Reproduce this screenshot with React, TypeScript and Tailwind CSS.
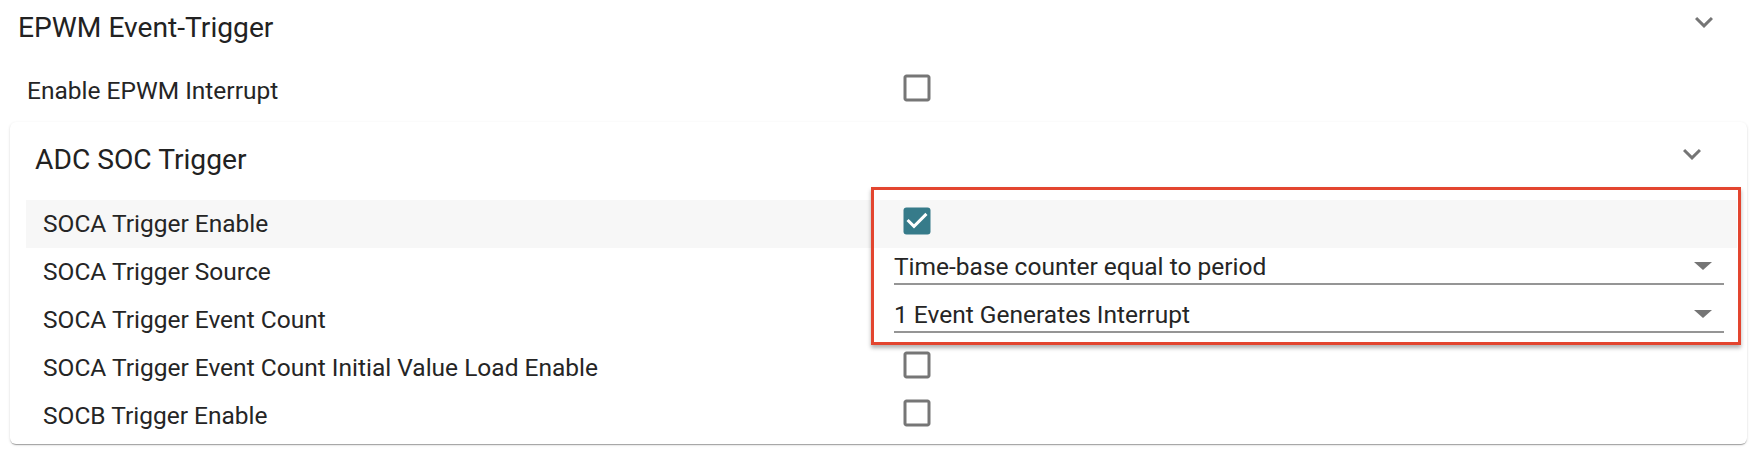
import React from "react";

const ExpandMore = ({ className = "" }: { className?: string }) => (
  <svg viewBox="0 0 24 24" width={36} height={36} className={className}>
    <path fill="#757575" d="M16.59 8.59 12 13.17 7.41 8.59 6 10l6 6 6-6z" />
  </svg>
);

const Unchecked = () => (
  <svg viewBox="0 0 24 24" width={36} height={36}>
    <path
      fill="#767676"
      d="M19 5v14H5V5h14m0-2H5c-1.1 0-2 .9-2 2v14c0 1.1.9 2 2 2h14c1.1 0 2-.9 2-2V5c0-1.1-.9-2-2-2z"
    />
  </svg>
);

const Checked = () => (
  <svg viewBox="0 0 24 24" width={36} height={36}>
    <rect x="3" y="3" width="18" height="18" rx="2" fill="#367b8a" />
    <path fill="#ffffff" d="M10 17l-5-5 1.41-1.41L10 14.17l7.59-7.59L19 8l-9 9z" />
  </svg>
);

const Caret = () => (
  <svg width={18} height={8} viewBox="0 0 18 8">
    <polygon points="0,0 18,0 9,8" fill="#757575" />
  </svg>
);

const CheckCell = ({ checked }: { checked?: boolean }) => (
  <div className="flex items-center h-full">
    <div className="ml-[5px] mb-[6px]">{checked ? <Checked /> : <Unchecked />}</div>
  </div>
);

const Select = ({ value }: { value: string }) => (
  <div className="flex items-end h-full pb-[11px]">
    <div className="flex items-center justify-between w-full h-[34px] border-b-2 border-[#959595]">
      <span className="text-[24.5px] text-[#252525] leading-none">{value}</span>
      <span className="mr-[12px] mb-[2px]">
        <Caret />
      </span>
    </div>
  </div>
);

const Row = ({
  label,
  children,
  shaded,
}: {
  label: string;
  children: React.ReactNode;
  shaded?: boolean;
}) => (
  <div className={`flex h-[48px] pl-[17px] pr-[13px] ${shaded ? "bg-[#f7f7f7]" : ""}`}>
    <div className="w-[851px] shrink-0 flex items-center text-[24.5px] text-[#252525]">{label}</div>
    <div className="flex-1">{children}</div>
  </div>
);

export default function App() {
  return (
    <div
      className="relative w-[1752px] h-[458px] bg-white pl-[10px] pr-[5px]"
      style={{ fontFamily: "Roboto, 'Liberation Sans', sans-serif" }}
    >
      {/* Section header */}
      <div className="flex items-center justify-between h-[54px] pl-[8px]">
        <div className="text-[28.2px] text-[#222222] pt-[2px]">EPWM Event-Trigger</div>
        <div className="mr-[25px] mb-[10px]">
          <ExpandMore />
        </div>
      </div>

      {/* Enable EPWM Interrupt */}
      <div className="flex h-[48px] mt-[13px] pl-[17px]">
        <div className="w-[867px] shrink-0 flex items-center text-[24.5px] text-[#252525]">
          Enable EPWM Interrupt
        </div>
        <div className="flex-1">
          <CheckCell />
        </div>
      </div>

      {/* ADC SOC Trigger card */}
      <div className="mt-[7px] rounded-[6px] bg-white pl-[16px] pr-[10px] pb-[4px] shadow-[0_2px_1px_-1px_rgba(0,0,0,0.2),0_1px_1px_0_rgba(0,0,0,0.14),0_1px_3px_0_rgba(0,0,0,0.12)]">
        <div className="flex items-center justify-between h-[72px] mb-[6px] pl-[9px]">
          <div className="text-[28.2px] text-[#222222] pt-[4px]">ADC SOC Trigger</div>
          <div className="mr-[27px] mb-[8px]">
            <ExpandMore />
          </div>
        </div>

        <Row label="SOCA Trigger Enable" shaded>
          <CheckCell checked />
        </Row>
        <Row label="SOCA Trigger Source">
          <Select value="Time-base counter equal to period" />
        </Row>
        <Row label="SOCA Trigger Event Count">
          <Select value="1 Event Generates Interrupt" />
        </Row>
        <Row label="SOCA Trigger Event Count Initial Value Load Enable">
          <CheckCell />
        </Row>
        <Row label="SOCB Trigger Enable">
          <CheckCell />
        </Row>
      </div>

      {/* Red highlight annotation */}
      <div className="absolute left-[871px] top-[187px] w-[870px] h-[158px] border-[3px] border-[#e3452f] shadow-[0_3px_4px_rgba(0,0,0,0.3)] pointer-events-none" />
    </div>
  );
}
